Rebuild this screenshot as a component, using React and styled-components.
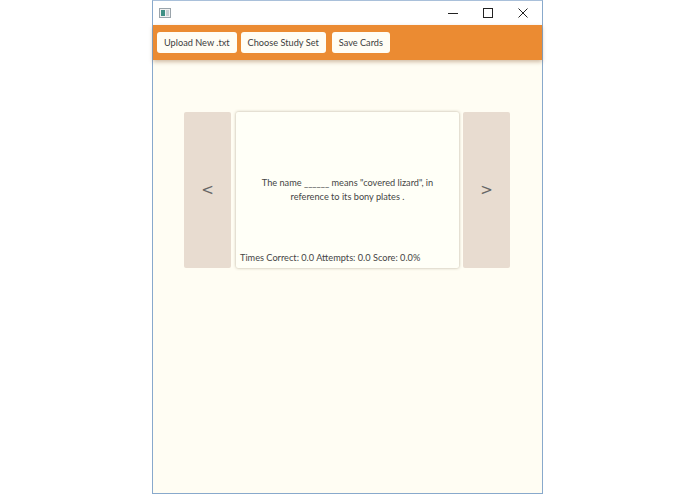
import React from "react";
import styled, { createGlobalStyle } from "styled-components";

const FONT = `"Segoe UI", Lato, "Noto Sans", sans-serif`;

const Global = createGlobalStyle`
  html, body { margin: 0; padding: 0; background: #ffffff; }
  body { font-family: ${FONT}; }
  #root { height: 494px; display: flex; justify-content: center; }
`;

const Window = styled.div`
  width: 389px;
  height: 492px;
  border: 1px solid #88a9cc;
  border-top: 1px solid #a9c0da;
  display: flex;
  flex-direction: column;
  background: #fffdf3;
`;

const TitleBar = styled.div`
  height: 24px;
  background: #ffffff;
  display: flex;
  align-items: center;
  padding-left: 6px;
  padding-right: 2px;
`;

const AppIcon = styled.svg`
  width: 12px;
  height: 10px;
  flex: none;
`;

const Controls = styled.div`
  margin-left: auto;
  display: flex;
  height: 100%;
`;

const Ctrl = styled.div`
  width: 35px;
  height: 100%;
  display: flex;
  align-items: center;
  justify-content: center;
`;

const Toolbar = styled.div`
  height: 35px;
  background: #eb8b32;
  display: flex;
  align-items: center;
  gap: 4px;
  padding: 0 4px;
  box-shadow: 0 2px 4px rgba(120, 70, 20, 0.35);
  position: relative;
  z-index: 1;
`;

const ToolButton = styled.button`
  height: 21px;
  border: none;
  border-radius: 3px;
  background: #fffdf5;
  font-family: ${FONT};
  font-size: 9.2px;
  color: #3c3c3c;
  padding: 0 7px;
  margin-left: ${(p) => p.$extra || 0}px;
  cursor: pointer;
`;

const Content = styled.div`
  flex: 1;
  display: flex;
  justify-content: center;
  align-items: flex-start;
  padding: 52px 1px 0 0;
`;

const Carousel = styled.div`
  display: flex;
  gap: 4px;
  height: 156px;
`;

const NavButton = styled.div`
  width: 47px;
  height: 100%;
  background: #e8dcd0;
  border-radius: 2px;
  display: flex;
  align-items: center;
  justify-content: center;
  color: #666666;
  font-family: "DejaVu Sans", sans-serif;
  font-size: 15px;
`;

const Card = styled.div`
  width: 223px;
  height: 100%;
  background: #fffff7;
  border-radius: 2px;
  box-shadow: 0 0 3px rgba(90, 70, 40, 0.45);
  margin-left: 1px;
  display: flex;
  flex-direction: column;
  font-size: 9.2px;
  color: #454545;
`;

const CardText = styled.div`
  flex: 1;
  display: flex;
  align-items: center;
  justify-content: center;
  text-align: center;
  line-height: 14px;
  padding: 17px 14px 0;
`;

const Stats = styled.div`
  padding: 0 0 3px 4px;
  line-height: 14px;
  white-space: nowrap;
`;

export default function App() {
  return (
    <>
      <Global />
      <Window>
        <TitleBar>
          <AppIcon viewBox="0 0 12 10">
            <rect x="0.5" y="0.5" width="11" height="9" fill="#f2f2f2" stroke="#9aa4ab" />
            <rect x="2" y="2" width="4" height="6" fill="#3f8f84" />
            <rect x="7" y="2" width="3" height="6" fill="#c9cfd3" />
          </AppIcon>
          <Controls>
            <Ctrl>
              <svg width="10" height="10" viewBox="0 0 10 10">
                <line x1="0" y1="5.5" x2="10" y2="5.5" stroke="#222" strokeWidth="1" />
              </svg>
            </Ctrl>
            <Ctrl>
              <svg width="10" height="10" viewBox="0 0 10 10">
                <rect x="0.5" y="0.5" width="9" height="9" fill="none" stroke="#222" strokeWidth="1" />
              </svg>
            </Ctrl>
            <Ctrl>
              <svg width="10" height="10" viewBox="0 0 10 10">
                <path d="M0.5 0.5 L9.5 9.5 M9.5 0.5 L0.5 9.5" stroke="#222" strokeWidth="1" />
              </svg>
            </Ctrl>
          </Controls>
        </TitleBar>
        <Toolbar>
          <ToolButton>Upload New .txt</ToolButton>
          <ToolButton>Choose Study Set</ToolButton>
          <ToolButton $extra={2}>Save Cards</ToolButton>
        </Toolbar>
        <Content>
          <Carousel>
            <NavButton>&lt;</NavButton>
            <Card>
              <CardText>
                The name ______ means "covered lizard", in reference to its bony plates .
              </CardText>
              <Stats>Times Correct: 0.0 Attempts: 0.0 Score: 0.0%</Stats>
            </Card>
            <NavButton>&gt;</NavButton>
          </Carousel>
        </Content>
      </Window>
    </>
  );
}
